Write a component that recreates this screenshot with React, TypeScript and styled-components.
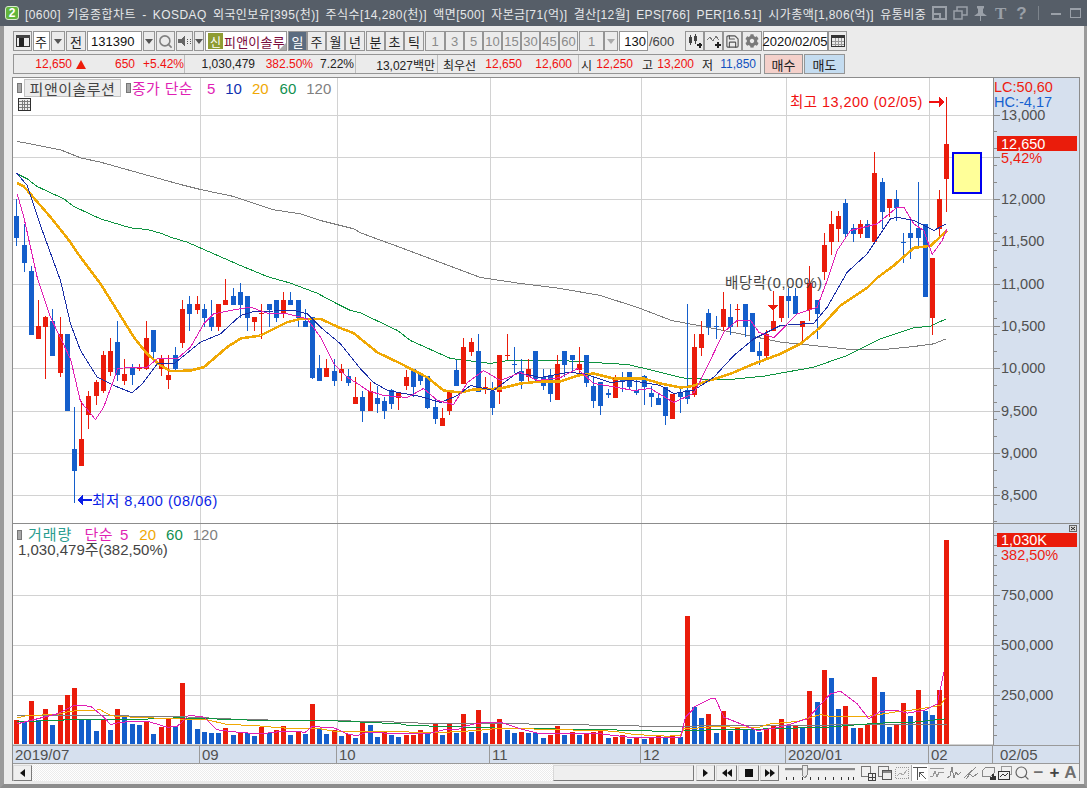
import styled, { createGlobalStyle } from 'styled-components'
import { Search, Save } from 'lucide-react'
import { FaCog } from 'react-icons/fa'

// ─── Data ─────────────────────────────────────────────────────────────────────

type Candle = [string, number, number, number, number]

// colour, high, body top, body bottom, low (pixels on the page)
const candles: Candle[] = [
  ['b',199,216,238,246],['b',224,245,263,272],['b',266,271,335,335],['r',300,326,339,339],['r',316,317,327,379],
  ['b',309,321,356,356],['r',317,334,373,377],['b',334,334,411,411],['b',407,449,471,503],['r',401,439,466,466],
  ['r',391,396,415,429],['r',380,382,396,405],['r',351,355,391,393],['r',338,351,372,376],['b',321,342,375,381],
  ['r',359,374,381,385],['b',364,368,375,385],['r',364,368,369,371],['r',321,338,369,370],['b',330,330,352,360],
  ['r',355,359,369,376],['r',355,375,380,389],['b',347,355,369,370],['r',300,309,343,348],['b',296,304,314,331],
  ['r',296,304,310,314],['b',304,309,318,327],['b',300,317,327,331],['r',304,304,327,331],['r',279,300,305,305],
  ['b',288,296,305,305],['b',283,292,305,318],['b',296,296,318,331],['r',317,317,322,331],['r',304,313,314,339],
  ['b',304,304,310,327],['b',300,300,318,322],['r',292,300,314,318],['b',292,300,305,305],['b',300,300,318,327],
  ['b',309,321,327,327],['b',317,317,378,379],['b',355,368,381,381],['r',359,368,377,377],['b',359,371,381,386],
  ['r',364,369,373,381],['b',369,376,383,386],['r',377,397,404,404],['b',391,397,411,422],['r',382,391,411,411],
  ['b',386,398,404,413],['b',397,401,411,419],['b',389,390,404,409],['r',392,392,398,410],['r',370,377,386,390],
  ['b',369,369,387,397],['b',372,374,381,385],['b',376,376,408,409],['b',398,407,419,424],['r',408,418,426,426],
  ['r',390,391,411,415],['b',360,370,386,386],['r',338,347,384,384],['r',338,342,352,356],['b',334,351,392,392],
  ['r',377,387,388,394],['b',382,391,408,415],['r',355,355,392,404],['r',334,355,356,360],['b',347,364,365,373],
  ['b',359,371,381,389],['r',359,369,377,381],['b',351,351,379,383],['b',369,377,386,390],['b',369,375,394,402],
  ['r',355,364,400,400],['b',351,351,365,377],['b',355,355,360,371],['r',347,364,370,373],['b',355,355,383,387],
  ['b',376,386,401,408],['b',382,382,406,415],['b',389,393,395,398],['r',375,377,398,398],['b',372,377,381,392],
  ['b',372,372,387,390],['b',380,390,393,395],['b',375,376,387,405],['b',386,393,397,407],['b',394,398,405,405],
  ['b',387,387,416,425],['r',394,394,419,419],['b',389,393,397,413],['b',304,390,399,404],['r',334,347,395,397],
  ['r',321,334,348,356],['b',309,313,327,335],['b',316,326,327,339],['r',292,309,327,331],['b',304,317,327,335],
  ['r',304,309,310,327],['b',304,304,327,337],['b',313,313,352,352],['b',342,351,356,365],['r',330,334,356,360],
  ['r',291,321,331,331],['r',296,296,318,322],['b',288,296,301,318],['b',288,296,314,314],['r',321,321,327,342],
  ['r',266,283,310,321],['b',300,300,314,339],['r',233,245,272,280],['r',211,224,242,255],['r',211,216,229,242],
  ['b',199,203,234,238],['b',224,228,234,242],['r',220,224,234,238],['b',220,224,238,238],['r',152,173,242,242],
  ['b',178,182,212,229],['r',199,199,208,217],['b',190,199,208,221],['b',233,242,243,263],['b',220,233,238,259],
  ['b',182,228,238,246],['b',224,224,297,297],['r',258,258,318,335],['r',190,199,229,239],['r',97,144,179,212],
]

// volume bars: top edge, in 3x pixels from y=640
const volTops = [
  240,243,183,240,207,255,195,165,144,238,238,272,238,270,207,225,252,255,246,282,260,238,258,129,235,267,276,279,279,264,285,279,279,288,260,279,270,258,285,276,282,192,267,282,270,288,282,294,246,255,291,273,285,291,
  285,285,270,276,252,285,252,278,222,276,210,279,246,237,270,279,276,279,279,294,285,258,285,276,285,282,276,270,294,291,285,297,294,297,291,285,294,288,291,-72,
  201,234,222,279,213,273,261,267,267,276,267,255,237,258,258,264,153,186,90,114,207,198,264,264,255,111,156,261,255,189,228,150,213,225,150,-300,
]
const volBlue = new Set([
  1,3,5,9,10,11,13,15,16,17,19,22,24,25,26,27,28,30,32,33,35,38,40,42,43,45,47,49,50,52,53,
  57,59,61,63,65,68,69,71,72,73,76,78,82,85,87,90,92,94,95,97,99,101,102,103,107,109,111,113,114,116,120,121,124,126,127,
])

const z = (ox: number, oy: number, flat: number[]) => {
  const out: number[] = []
  for (let i = 0; i < flat.length; i += 2) out.push(ox + flat[i] / 3, oy + flat[i + 1] / 3)
  return out
}

const ma120 = [
  ...z(0,110,[50,93,75,97,180,118,240,142,300,155,400,183,540,222,600,237,700,258,780,285,820,298,900,310,960,330,1060,355,1080,367]),
  400,247,440,262,480,277,520,283,560,288,600,295,640,308,671,320,
  ...z(680,90,[70,708,180,730,300,755,400,765,500,776,600,778,700,768,760,760,797,745]),
]
const ma60 = [
  ...z(0,110,[50,190,80,205,110,228,190,265,220,288,300,325,350,340,390,352,440,357,480,368,510,380,560,395,640,430,720,465,800,498,870,518,950,548,1010,580,1050,600,1080,607]),
  376,320,397,330,410,340,450,358,490,363,507,360,560,360,593,362,627,364,653,370,680,377,
  ...z(680,90,[30,865,150,867,250,857,400,830,500,795,600,745,700,712,750,707,797,685]),
]
const ma20 = [
  ...z(0,110,[50,218,70,228,100,262,150,320,200,382,240,440,300,520,350,600,400,680,440,730,480,765,510,782,570,780,610,770,680,710,720,684,780,675,830,650,860,635,900,625,960,625,1020,653,1060,668,1080,685]),
  377,352,400,363,427,377,443,390,460,392,473,389,500,388,520,383,540,381,560,381,577,375,593,373,613,378,643,378,660,383,680,387,
  ...z(680,90,[30,888,150,850,220,820,300,790,360,760,420,710,480,645,560,592,590,562,640,525,700,472,750,466,800,420]),
]
const ma10 = [
  ...z(0,110,[48,187,80,225,120,345,180,510,210,640,240,720,290,800,340,825,395,847,425,820,470,760,520,760,600,695,660,670,720,615,760,603,880,600,920,610,960,650,1020,700,1080,775]),
  373,382,387,390,420,396,440,402,457,395,470,385,493,390,517,372,540,377,567,372,583,373,610,382,630,380,660,385,673,393,693,390,
  ...z(680,90,[100,860,160,795,220,745,300,705,400,698,440,650,500,545,560,490,600,430,630,385,650,380,700,390,760,420,797,400]),
]
const ma5 = [
  ...z(0,110,[50,250,70,320,110,500,150,620,210,745]),
  80,401,90,413,95,419,103,407,113,380,117,368,
  ...z(0,110,[400,770,440,770,470,745,530,745,570,710,610,640,640,610,700,598,750,590,800,608,860,610,920,625,960,680,1000,760,1040,800,1080,825]),
  367,390,383,395,407,397,423,388,437,400,453,404,467,382,483,370,500,380,520,372,537,380,560,377,577,368,593,383,617,387,633,390,650,388,673,402,693,393,700,380,
  ...z(680,90,[130,725,170,690,210,690,235,725,280,742,350,670,410,650,440,570,470,480,510,420,590,400,650,350,670,350,700,400,730,420,755,492,785,450,800,415]),
]

const vol120 = [
  ...z(0,640,[50,226,384,226,386,228,530,228,700,236,860,240,1030,241,1200,245]),
  ...z(400,640,[50,247,70,250,380,250,415,253,700,254,720,257,840,258]),
  ...z(680,640,[100,255,800,252]),
]
const vol60 = [
  ...z(0,640,[50,242,188,241,190,238,430,236,530,232,620,234,700,238,860,240,1000,241]),
  ...z(400,640,[0,250,20,254,70,256,200,260,300,263,630,268,840,274,850,270]),
  ...z(680,640,[100,268,230,266,440,260,590,248,700,245,795,235]),
]
const vol20 = [
  ...z(0,640,[50,232,80,225,170,222,210,212,300,208,330,225,350,228,520,235,620,238,680,252,760,255,840,262,910,265,960,265,1000,272,1100,272]),
  ...z(400,640,[50,275,140,275,230,270,300,263,500,268,640,272,700,282,800,287,840,285,850,265,900,262]),
  ...z(680,640,[100,258,230,262,270,250,350,243,420,222,450,228,560,228,640,215,700,208,780,195,795,172]),
]
const vol5 = [
  ...z(0,640,[50,250,110,235,170,220,220,195,270,197,310,230,330,252,360,245,440,242,500,260,530,258,565,224,610,230,650,268,720,276,780,280,850,272,915,275,935,258,1000,262,1040,280,1070,286,1100,275,1200,280]),
  ...z(400,640,[80,280,130,268,170,268,190,258,230,248,300,245,360,265,420,280,520,278,600,280,700,292,840,292,855,230,880,205]),
  ...z(680,640,[40,200,90,175,105,175,130,230,230,270,300,260,380,235,450,160,480,152,530,190,565,235,600,212,650,210,680,218,730,210,770,190,790,95]),
]

const candleX = (i: number) => Math.round(16.33 + 7.21 * i)
const priceY = (p: number) => Math.round(368.3 + (10000 - p) * 0.0846)
const RED = '#ea1c0b'
const BLUE = '#145ecb'
const vGrid = [200, 337, 490, 641, 786, 929]
const priceTicks = [13000, 12500, 12000, 11500, 11000, 10500, 10000, 9500, 9000, 8500]

// ─── Chart drawings ───────────────────────────────────────────────────────────

function Line({ pts, color, width = 1 }: { pts: number[]; color: string; width?: number }) {
  return <polyline points={pts.join(' ')} fill="none" stroke={color} strokeWidth={width} strokeLinejoin="round" transform="translate(0.5 0.5)" />
}

function PriceChart() {
  return (
    <PlotSvg viewBox="13 78 980 445" width={980} height={445} shapeRendering="crispEdges">
      {priceTicks.map((p) => <line key={p} x1={13} x2={993} y1={priceY(p) + 0.5} y2={priceY(p) + 0.5} stroke="#d2d2d2" />)}
      {vGrid.map((x) => <line key={x} x1={x + 0.5} x2={x + 0.5} y1={78} y2={523} stroke="#d2d2d2" />)}
      <Line pts={ma120} color="#7d7d7d" />
      <Line pts={ma60} color="#0e9340" />
      {candles.map(([c, hi, top, bot, lo], i) => {
        const x = candleX(i)
        const col = c === 'r' ? RED : BLUE
        return (
          <g key={i} fill={col}>
            <rect x={x} y={hi} width={1} height={lo - hi} />
            <rect x={x - 2} y={top} width={5} height={Math.max(bot - top, 1)} />
          </g>
        )
      })}
      <Line pts={ma20} color="#f0a804" width={2.5} />
      <Line pts={ma10} color="#1a2ea6" />
      <Line pts={ma5} color="#e01fb4" />
      <rect x={953} y={153} width={28} height={40} fill="#ffff99" stroke="#0000f0" strokeWidth={2} />
      <polygon points="768,305 778,305 773,311" fill={RED} />
      <ChartLabel x={790} y={107} fill="#f01010" $ls={0.45}>최고 13,200 (02/05)</ChartLabel>
      <rect x={929} y={101} width={11} height={2} fill="#f01010" />
      <polygon points="939,97 939,107 944,102" fill="#f01010" />
      <ChartLabel x={725} y={288} fill="#444" $ls={0.7}>배당락(0,00%)</ChartLabel>
      <polygon points="77,500 83,495 83,505" fill="#0a1ee6" />
      <rect x={82} y={499} width={10} height={2} fill="#0a1ee6" />
      <ChartLabel x={92} y={506} fill="#0a1ee6" $ls={0.55}>최저 8,400 (08/06)</ChartLabel>
    </PlotSvg>
  )
}

function PriceAxis() {
  const minor: number[] = []
  for (let p = 8200; p <= 13000; p += 200) minor.push(p)
  return (
    <PlotSvg viewBox="994 78 85 445" width={85} height={445}>
      <g shapeRendering="crispEdges">
        {minor.map((p) => <rect key={p} x={994} y={priceY(p)} width={3} height={1} fill="#8a8a8a" />)}
        {priceTicks.map((p) => <rect key={p} x={994} y={priceY(p)} width={6} height={1} fill="#8a8a8a" />)}
      </g>
      <AxisLabel x={994} y={92} fill="#ee1c10">LC:50,60</AxisLabel>
      <AxisLabel x={994} y={107} fill="#1560d0">HC:-4,17</AxisLabel>
      {priceTicks.filter((p) => p !== 12500).map((p) => <AxisLabel key={p} x={1001} y={priceY(p) + 5}>{p.toLocaleString('en-US')}</AxisLabel>)}
      <rect x={997} y={136} width={80} height={15} fill={RED} />
      <AxisLabel x={1001} y={149} fill="#fff">12,650</AxisLabel>
      <AxisLabel x={1001} y={163} fill="#ee1c10">5,42%</AxisLabel>
    </PlotSvg>
  )
}

function VolumeChart() {
  return (
    <PlotSvg viewBox="13 524 980 221" width={980} height={221} shapeRendering="crispEdges">
      {[595, 645, 695].map((y) => <line key={y} x1={13} x2={993} y1={y} y2={y} stroke="#d2d2d2" />)}
      {vGrid.map((x) => <line key={x} x1={x + 0.5} x2={x + 0.5} y1={524} y2={745} stroke="#d2d2d2" />)}
      <line x1={13} x2={993} y1={744.5} y2={744.5} stroke="#d2d2d2" />
      {volTops.map((t, i) => {
        const top = Math.round(640 + t / 3)
        return <rect key={i} x={candleX(i) - 2} y={top} width={5} height={744 - top} fill={volBlue.has(i) ? BLUE : RED} />
      })}
      <Line pts={vol120} color="#7d7d7d" />
      <Line pts={vol60} color="#0e9340" />
      <Line pts={vol20} color="#f0a804" />
      <Line pts={vol5} color="#e01fb4" />
    </PlotSvg>
  )
}

function VolumeAxis() {
  const minor: number[] = []
  for (let y = 745; y > 530; y -= 10) minor.push(y)
  return (
    <PlotSvg viewBox="994 524 85 221" width={85} height={221}>
      <g shapeRendering="crispEdges">
        {minor.map((y) => <rect key={y} x={994} y={y} width={3} height={1} fill="#8a8a8a" />)}
        {[595, 645, 695].map((y) => <rect key={y} x={994} y={y} width={6} height={1} fill="#8a8a8a" />)}
        <rect x={997} y={533} width={80} height={14} fill={RED} />
        <rect x={1069.5} y={525.5} width={7} height={6} fill="#ddd" stroke="#666" />
      </g>
      <path d="M1071 527l4 3M1075 527l-4 3" stroke="#222" />
      <AxisLabel x={1001} y={545} fill="#fff">1,030K</AxisLabel>
      <AxisLabel x={1001} y={560} fill="#ee1c10">382,50%</AxisLabel>
      <AxisLabel x={1001} y={600}>750,000</AxisLabel>
      <AxisLabel x={1001} y={650}>500,000</AxisLabel>
      <AxisLabel x={1001} y={700}>250,000</AxisLabel>
    </PlotSvg>
  )
}

// ─── Small icons ──────────────────────────────────────────────────────────────

const Ico = ({ children, size = 16 }: { children: React.ReactNode; size?: number }) => (
  <IconSvg width={size} height={size} viewBox="0 0 16 16" fill="none" stroke="#777" strokeWidth={1} shapeRendering="crispEdges">{children}</IconSvg>
)

const LayoutIcon = () => (
  <Ico><rect x="1.5" y="2.5" width="13" height="11" stroke="#333" /><rect x="1" y="2" width="14" height="3" fill="#444" stroke="none" /><rect x="4" y="5" width="5" height="9" fill="#222" stroke="none" /></Ico>
)
const SpeakerIcon = () => (
  <Ico><path d="M1 6h3l4-4v12l-4-4H1z" fill="#666" stroke="none" /><path d="M10 6h1M10 8h1M10 10h1M13 6h1M13 8h1M13 10h1" stroke="#555" /></Ico>
)
const CandleAdd = () => (
  <Ico><rect x="2" y="4" width="3" height="6" fill="#444" stroke="none" /><path d="M3.5 2v10" stroke="#444" /><rect x="7" y="3" width="3" height="5" fill="#444" stroke="none" /><path d="M8.500 1v10" stroke="#444" /><path d="M10 12h5M12.500 10v5" stroke="#222" strokeWidth={2} /></Ico>
)
const LineAdd = () => (
  <Ico><path d="M1 7l3-3 3 4 3-5 3 4" stroke="#777" /><path d="M9 12h6M12 9v6" stroke="#222" strokeWidth={2} /></Ico>
)
const CalIcon = () => (
  <Ico><rect x="1.500" y="2.500" width="13" height="11" stroke="#333" /><rect x="2" y="3" width="12" height="2" fill="#333" stroke="none" /><path d="M2 8h12M2 11h12M5.500 5v8M8.500 5v8M11.500 5v8" stroke="#999" /></Ico>
)
const TableIcon = () => (
  <Ico size={15}><rect x="1.500" y="1.500" width="13" height="13" stroke="#222" fill="#eee" /><path d="M2 5h12M2 8h12M2 11h12M5.500 3v11M8.500 3v11M11.500 3v11" stroke="#777" /></Ico>
)
const BarIcons = {
  frameGrid: <Ico><rect x="1.500" y="1.500" width="9" height="10" /><rect x="8.500" y="8.500" width="6.500" height="6.500" fill="#eee" stroke="#444" /><path d="M12 9v6M9 12h6" stroke="#444" /></Ico>,
  overlap: <Ico><rect x="1.500" y="1.500" width="10" height="10" /><rect x="5.500" y="5.500" width="9" height="9" fill="#eee" stroke="#555" /><rect x="6" y="6" width="8" height="2" fill="#888" stroke="none" /></Ico>,
  dashed: <Ico><rect x="1.500" y="2.500" width="13" height="11" strokeDasharray="1 1" stroke="#999" /><path d="M3 11l3-3 3 2 4-5" stroke="#aaa" /></Ico>,
  cursor: <Ico><path d="M1 2h14M5 2v13" stroke="#555" /><path d="M14 14L7 7M7 12V7h5" stroke="#555" /></Ico>,
  wave: <Ico><path d="M1 3h14M1 11h3l2-5 2 6 2-5h5" stroke="#999" /></Ico>,
  squiggle: <Ico><path d="M1 13l3-2 2-9 2 11 2-6 2 3 3-3" stroke="#888" /></Ico>,
  trend: <Ico><path d="M1 13L13 2M3 14l4-5 3 3 5-4" stroke="#888" /></Ico>,
  box: <Ico><path d="M2 6l4-4h8v6l-3 3H2z" stroke="#888" /><path d="M11 15v-3M13 15V9M15 15v-4" stroke="#333" strokeWidth={1.500} /></Ico>,
  boxChart: <Ico><rect x="4.500" y="1.500" width="10" height="8" stroke="#999" /><rect x="1.500" y="6.500" width="11" height="8" fill="#eee" stroke="#333" /><path d="M3 12l3-3 2 2 3-3" stroke="#333" /></Ico>,
}

// ─── App ──────────────────────────────────────────────────────────────────────

const title =
  '[0600] 키움종합차트 - KOSDAQ 외국인보유[395(천)] 주식수[14,280(천)] 액면[500] 자본금[71(억)] 결산[12월] EPS[766] PER[16.51] 시가총액[1,806(억)] 유통비중'
const dayBtns = [19, 19, 19, 20]
const nums = ['1', '3', '5', '10', '15', '30', '45', '60']
const dateCells: [string, number][] = [['2019/07', 187], ['09', 137], ['10', 153], ['11', 151], ['12', 145], ['2020/01', 143], ['02', 64]]

export default function App() {
  return (
    <Window>
      <GlobalStyle />
      <TitleBar>
        <AppBadge>2</AppBadge>
        <TitleText>{title}</TitleText>
        <TitleIcons>
          <svg width="15" height="14" viewBox="0 0 15 14" fill="none" stroke="#9aa0a8" strokeWidth="2"><rect x="1" y="1" width="13" height="12" /><path d="M1 8h7v5" /></svg>
          <svg width="15" height="14" viewBox="0 0 15 14" fill="none" stroke="#9aa0a8" strokeWidth="1.500"><rect x="4" y="1" width="10" height="8" /><rect x="1" y="5" width="8" height="8" fill="#565e68" /></svg>
          <svg width="13" height="15" viewBox="0 0 13 15" fill="#9aa0a8"><path d="M3 0h7v2L9 3v4l4 3H0l4-3V3L3 2zM6 10h1v5H6z" /></svg>
          <TitleGlyph>T</TitleGlyph>
          <TitleGlyph $sans>?</TitleGlyph>
          <TitleSep />
          <TitleMin />
          <TitleMax />
          <svg width="10" height="10" viewBox="0 0 10 10" stroke="#9aa0a8" strokeWidth="1.300"><path d="M0 0l10 10M10 0L0 10" /></svg>
        </TitleIcons>
      </TitleBar>

      <Body>
        <ToolRow>
          <ToolBtn $w={19}><LayoutIcon /></ToolBtn>
          <ComboText $w={17}>주</ComboText>
          <ToolBtn $w={14}><Caret /></ToolBtn>
          <ToolBtn $w={20}>전</ToolBtn>
          <ComboText $w={55} $left>131390</ComboText>
          <ToolBtn $w={12}><Caret /></ToolBtn>
          <ToolBtn $w={19}><Search size={15} color="#808080" strokeWidth={2.500} /></ToolBtn>
          <ToolBtn $w={17}><SpeakerIcon /></ToolBtn>
          <ToolBtn $w={10}><Caret /></ToolBtn>
          <SignalBox>
            <SignalTag>신</SignalTag>
            <SignalName>피앤이솔루</SignalName>
            <SignalCorner />
          </SignalBox>
          <BtnGroup>
            {['일', '주', '월', '년'].map((t, i) => <ToolBtn key={t} $w={dayBtns[i]} $active={i === 0}>{t}</ToolBtn>)}
          </BtnGroup>
          <BtnGroup>
            {['분', '초', '틱'].map((t, i) => <ToolBtn key={t} $w={dayBtns[i + 1]}>{t}</ToolBtn>)}
          </BtnGroup>
          <BtnGroup>
            {nums.map((n, i) => <ToolBtn key={n} $w={i === 0 ? 20 : 19} $dim>{n}</ToolBtn>)}
          </BtnGroup>
          <BtnGroup>
            <ToolBtn $w={25} $dim>1</ToolBtn>
            <ToolBtn $w={14}><Caret $dim /></ToolBtn>
          </BtnGroup>
          <ComboText $w={29} $right>130</ComboText>
          <CountText>/600</CountText>
          <BtnGroup>
            <ToolBtn $w={19}><CandleAdd /></ToolBtn>
            <ToolBtn $w={19}><LineAdd /></ToolBtn>
            <ToolBtn $w={19}><Save size={15} color="#555" strokeWidth={1.800} /></ToolBtn>
            <ToolBtn $w={20}><FaCog size={14} color="#7a7a7a" /></ToolBtn>
          </BtnGroup>
          <BtnGroup>
            <ComboText $w={65}>2020/02/05</ComboText>
            <ToolBtn $w={19}><CalIcon /></ToolBtn>
          </BtnGroup>
        </ToolRow>

        <StatusRow>
          <StatusGroup>
            <StatCell $w={171}>
              <Stat $w={58} $c="#f01010">12,650</Stat>
              <UpMark />
              <Stat $w={49} $c="#f01010">650</Stat>
              <Stat $w={49} $c="#f01010">+5.42%</Stat>
            </StatCell>
            <StatCell $w={171}>
              <Stat $w={70}>1,030,479</Stat>
              <Stat $w={58} $c="#f01010">382.50%</Stat>
              <Stat $w={41}>7.22%</Stat>
            </StatCell>
            <StatCell $w={82}>
              <Stat $w={79}>13,027백만</Stat>
            </StatCell>
            <StatCell $w={141}>
              <Stat $w={38}>최우선</Stat>
              <Stat $w={46} $c="#f01010">12,650</Stat>
              <Stat $w={50} $c="#f01010">12,600</Stat>
            </StatCell>
            <StatCell $w={183} $last>
              <Stat $w={13}>시</Stat>
              <Stat $w={41} $c="#f01010">12,250</Stat>
              <Stat $w={20}>고</Stat>
              <Stat $w={41} $c="#f01010">13,200</Stat>
              <Stat $w={19}>저</Stat>
              <Stat $w={43} $c="#1050c0">11,850</Stat>
            </StatCell>
          </StatusGroup>
          <TradeBtn $bg="#f4d0ca" $w={39}>매수</TradeBtn>
          <TradeBtn $bg="#c4dcf0" $w={41}>매도</TradeBtn>
        </StatusRow>

        <ChartFrame>
          <Pane $h={445}>
            <Plot>
              <PriceChart />
              <PriceLegend>
                <LegendHandle />
                <LegendBtn>피앤이솔루션</LegendBtn>
                <LegendHandle />
                <LegendText $c="#e01fb4" $ml={1} $ls={0.3}>종가 단순</LegendText>
                <LegendText $c="#e01fb4" $ml={14}>5</LegendText>
                <LegendText $c="#1030b0" $ml={10}>10</LegendText>
                <LegendText $c="#f0a804" $ml={10}>20</LegendText>
                <LegendText $c="#109050" $ml={11}>60</LegendText>
                <LegendText $c="#808080" $ml={10}>120</LegendText>
              </PriceLegend>
              <TableBtn><TableIcon /></TableBtn>
            </Plot>
            <AxisCol><PriceAxis /></AxisCol>
          </Pane>
          <Pane $h={222} $divider>
            <Plot>
              <VolumeChart />
              <VolumeLegend>
                <LegendRow>
                  <LegendHandle />
                  <LegendText $c="#2a9d8f" $ml={6} $ls={1}>거래량</LegendText>
                  <LegendText $c="#e01fb4" $ml={12} $ls={0.5}>단순</LegendText>
                  <LegendText $c="#e01fb4" $ml={7}>5</LegendText>
                  <LegendText $c="#f0a804" $ml={11}>20</LegendText>
                  <LegendText $c="#109050" $ml={10}>60</LegendText>
                  <LegendText $c="#808080" $ml={10}>120</LegendText>
                </LegendRow>
                <LegendText $c="#444" $ml={1}>1,030,479주(382,50%)</LegendText>
              </VolumeLegend>
            </Plot>
            <AxisCol><VolumeAxis /></AxisCol>
          </Pane>
          <DateRow>
            {dateCells.map(([t, w]) => <DateCell key={t} $w={w}>{t}</DateCell>)}
            <DateLast>02/05</DateLast>
          </DateRow>
          <ScrollRow>
            <ScrollBtn $w={19}><LeftTri /></ScrollBtn>
            <ScrollTrack />
            <ScrollThumb />
            <NavGroup>
              <ScrollBtn $w={19}><RightTri /></ScrollBtn>
              <ScrollBtn $w={21}><LeftTri /><LeftTri /></ScrollBtn>
              <ScrollBtn $w={21}><StopMark /></ScrollBtn>
              <ScrollBtn $w={19}><RightTri /><RightTri /></ScrollBtn>
            </NavGroup>
            <IconSvg width="72" height="17" viewBox="0 0 72 17" shapeRendering="crispEdges">
              <rect x="1" y="4" width="70" height="2" fill="#8a8a8a" />
              <rect x="1" y="6" width="70" height="1" fill="#ddd" />
              <path d="M18 1h5v10l-2 3-3-3z" fill="#e8e8e8" stroke="#8a8a8a" />
              {[2, 9, 18, 26, 34, 41, 49, 57, 64, 69].map((x) => <rect key={x} x={x} y={13} width={1} height={3} fill="#333" />)}
            </IconSvg>
            <BottomIcons>
              {BarIcons.frameGrid}
              {BarIcons.overlap}
              {BarIcons.dashed}
              <ActiveTool>{BarIcons.cursor}</ActiveTool>
              {BarIcons.wave}
              {BarIcons.squiggle}
              {BarIcons.trend}
              {BarIcons.box}
              {BarIcons.boxChart}
              <Search size={16} color="#666" strokeWidth={1.800} />
              <BoldGlyph>−</BoldGlyph>
              <BoldGlyph $dark>+</BoldGlyph>
              <BoldGlyph>A</BoldGlyph>
            </BottomIcons>
          </ScrollRow>
        </ChartFrame>
      </Body>
    </Window>
  )
}

// ─── Styles ───────────────────────────────────────────────────────────────────

const FONT = `"Liberation Sans", "Noto Sans CJK KR", sans-serif`

const GlobalStyle = createGlobalStyle`
  html, body { margin: 0; padding: 0; background: #ebebeb; overflow: hidden; }
  * { box-sizing: border-box; }
  body { font-family: ${FONT}; font-size: 12px; color: #222; }
`

const Window = styled.div`
  width: 1087px;
  height: 788px;
  display: flex;
  flex-direction: column;
  background: #ebebeb;
  border-left: 4px solid #9a9a9a;
  border-right: 3px solid #9a9a9a;
  border-bottom: 4px solid #8c8c8c;
`

const TitleBar = styled.div`
  height: 26px;
  margin-left: -4px;
  margin-right: -3px;
  flex: none;
  display: flex;
  align-items: center;
  background: #565e68;
  padding-left: 5px;
`

const AppBadge = styled.div`
  width: 14px;
  height: 14px;
  border-radius: 3px;
  background: #62b53c;
  border: 1px solid #d8eccd;
  color: #fff;
  font-size: 12px;
  font-weight: bold;
  display: flex;
  align-items: center;
  justify-content: center;
  flex: none;
`

const TitleText = styled.div`
  width: 902px;
  margin-left: 6px;
  flex: none;
  overflow: hidden;
  white-space: nowrap;
  color: #e6e8ea;
  font-size: 12px;
  letter-spacing: 0.42px;
  word-spacing: 2.5px;
`

const TitleIcons = styled.div`
  display: flex;
  align-items: center;
  gap: 6px;
  margin-left: 5px;
`

const TitleGlyph = styled.span<{ $sans?: boolean }>`
  color: #9aa0a8;
  font-family: ${({ $sans }) => ($sans ? '"Liberation Sans"' : '"Liberation Serif"')}, sans-serif;
  font-weight: bold;
  font-size: 17px;
  line-height: 1;
  margin: 0 2px;
`

const TitleSep = styled.div`
  width: 1px;
  height: 14px;
  background: #7d848c;
  margin: 0 3px;
`

const TitleMin = styled.div`
  width: 10px;
  height: 2px;
  background: #9aa0a8;
  align-self: flex-end;
  margin: 0 3px 7px;
`

const TitleMax = styled.div`
  width: 11px;
  height: 10px;
  border: 1px solid #9aa0a8;
  border-top-width: 2px;
  margin-right: 3px;
`

const Body = styled.div`
  flex: 1;
  display: flex;
  flex-direction: column;
  padding: 5px 4px 3px 8px;
  min-height: 0;
`

const ToolRow = styled.div`
  display: flex;
  height: 20px;
  gap: 1px;
  padding-left: 1px;
  flex: none;
`

const BtnGroup = styled.div`
  display: flex;
`

const ToolBtn = styled.div<{ $w: number; $active?: boolean; $dim?: boolean }>`
  width: ${({ $w }) => $w}px;
  height: 20px;
  flex: none;
  display: flex;
  align-items: center;
  justify-content: center;
  border: 1px solid #959595;
  background: ${({ $active }) => ($active ? '#5b6c80' : '#ebebeb')};
  color: ${({ $active, $dim }) => ($active ? '#fff' : $dim ? '#8a8a8a' : '#222')};
  font-size: 13px;
  overflow: hidden;
`

const ComboText = styled.div<{ $w: number; $left?: boolean; $right?: boolean }>`
  width: ${({ $w }) => $w}px;
  height: 20px;
  flex: none;
  display: flex;
  align-items: center;
  justify-content: ${({ $left, $right }) => ($left ? 'flex-start' : $right ? 'flex-end' : 'center')};
  padding: 0 1px 0 ${({ $left }) => ($left ? 3 : 0)}px;
  border: 1px solid #959595;
  background: #fff;
  color: #111;
  font-size: 13px;
  white-space: nowrap;
`

const Caret = styled.span<{ $dim?: boolean }>`
  width: 0;
  height: 0;
  border-left: 4px solid transparent;
  border-right: 4px solid transparent;
  border-top: 5px solid ${({ $dim }) => ($dim ? '#aaa' : '#555')};
`

const SignalBox = styled.div`
  position: relative;
  width: 82px;
  height: 20px;
  flex: none;
  display: flex;
  align-items: center;
  gap: 1px;
  padding-left: 2px;
  border: 1px solid #959595;
  background: #fff;
`

const SignalTag = styled.span`
  width: 15px;
  height: 16px;
  flex: none;
  display: flex;
  align-items: center;
  justify-content: center;
  background: #8f9c33;
  color: #fff;
  font-size: 12px;
`

const SignalName = styled.span`
  color: #7a0c3c;
  font-size: 13px;
  white-space: nowrap;
  letter-spacing: 0.2px;
`

const SignalCorner = styled.span`
  position: absolute;
  right: 0;
  bottom: 0;
  border-left: 7px solid transparent;
  border-bottom: 7px solid #a8a8a8;
`

const CountText = styled.div`
  width: 35px;
  flex: none;
  display: flex;
  align-items: center;
  font-size: 13px;
  color: #444;
`

const StatusRow = styled.div`
  display: flex;
  height: 20px;
  margin-top: 3px;
  padding-left: 1px;
  flex: none;
`

const StatusGroup = styled.div`
  display: flex;
  width: 748px;
  border: 1px solid #959595;
  margin-right: 3px;
`

const StatCell = styled.div<{ $w: number; $last?: boolean }>`
  width: ${({ $w }) => $w}px;
  flex: none;
  display: flex;
  align-items: center;
  border-right: ${({ $last }) => ($last ? 'none' : '1px solid #bdbdbd')};
`

const Stat = styled.span<{ $w: number; $c?: string }>`
  width: ${({ $w }) => $w}px;
  flex: none;
  text-align: right;
  color: ${({ $c }) => $c ?? '#222'};
  white-space: nowrap;
`

const UpMark = styled.span`
  width: 0;
  height: 0;
  margin-left: 4px;
  flex: none;
  border-left: 5px solid transparent;
  border-right: 5px solid transparent;
  border-bottom: 9px solid #ee1c0a;
`

const TradeBtn = styled.div<{ $bg: string; $w: number }>`
  width: ${({ $w }) => $w}px;
  flex: none;
  margin-right: 1px;
  display: flex;
  align-items: center;
  justify-content: center;
  background: ${({ $bg }) => $bg};
  border: 1px solid #959595;
  font-size: 13px;
  color: #222;
`

const ChartFrame = styled.div`
  flex: 1;
  margin-top: 3px;
  display: flex;
  flex-direction: column;
  border-top: 1px solid #8c8c8c;
  border-left: 1px solid #8c8c8c;
  border-right: 1px solid #8c8c8c;
  min-height: 0;
`

const Pane = styled.div<{ $h: number; $divider?: boolean }>`
  height: ${({ $h }) => $h}px;
  flex: none;
  display: flex;
  border-top: ${({ $divider }) => ($divider ? '1px solid #8c8c8c' : 'none')};
`

const Plot = styled.div`
  position: relative;
  width: 980px;
  flex: none;
  background: #fff;
  overflow: hidden;
`

const AxisCol = styled.div`
  flex: 1;
  background: #d6e0ee;
  border-left: 1px solid #8c8c8c;
  overflow: hidden;
`

const PlotSvg = styled.svg`
  display: block;
`

const IconSvg = styled.svg`
  display: block;
  flex: none;
`

const ChartLabel = styled.text<{ $ls: number }>`
  font-family: ${FONT};
  font-size: 14.5px;
  letter-spacing: ${({ $ls }) => $ls}px;
`

const AxisLabel = styled.text`
  font-family: ${FONT};
  font-size: 14.5px;
  fill: ${({ fill }) => fill ?? '#505050'};
`

const PriceLegend = styled.div`
  position: absolute;
  top: 1px;
  left: 4px;
  display: flex;
  align-items: center;
`

const LegendHandle = styled.span`
  width: 5px;
  height: 10px;
  flex: none;
  background: #a8a8a8;
  border: 1px solid #777;
`

const LegendBtn = styled.span`
  width: 97px;
  height: 18px;
  margin: 0 5px 0 2px;
  display: flex;
  align-items: center;
  justify-content: center;
  background: #ececec;
  border: 1px solid #c4c4c4;
  font-size: 15px;
  color: #444;
  letter-spacing: 0.5px;
  white-space: nowrap;
`

const LegendText = styled.span<{ $c: string; $ml: number; $ls?: number }>`
  margin-left: ${({ $ml }) => $ml}px;
  color: ${({ $c }) => $c};
  font-size: 15px;
  line-height: 15px;
  letter-spacing: ${({ $ls }) => $ls ?? 0}px;
  white-space: nowrap;
`

const TableBtn = styled.div`
  position: absolute;
  top: 19px;
  left: 4px;
  line-height: 0;
`

const VolumeLegend = styled.div`
  position: absolute;
  top: 3px;
  left: 4px;
  display: flex;
  flex-direction: column;
  gap: 0;
`

const LegendRow = styled.div`
  display: flex;
  align-items: center;
`

const DateRow = styled.div`
  height: 19px;
  flex: none;
  display: flex;
  background: #d6e0ee;
  border-top: 1px solid #9a9a9a;
  border-bottom: 1px solid #9a9a9a;
`

const DateCell = styled.div<{ $w: number }>`
  width: ${({ $w }) => $w}px;
  flex: none;
  padding-left: 2px;
  border-right: 1px solid #9a9a9a;
  font-size: 15px;
  line-height: 17px;
  color: #505050;
`

const DateLast = styled.div`
  flex: 1;
  padding-left: 7px;
  font-size: 15px;
  line-height: 17px;
  color: #505050;
`

const ScrollRow = styled.div`
  height: 17px;
  flex: none;
  display: flex;
  align-items: center;
  background: #f0f0f0;
`

const ScrollBtn = styled.div<{ $w: number }>`
  width: ${({ $w }) => $w}px;
  height: 16px;
  flex: none;
  display: flex;
  align-items: center;
  justify-content: center;
  background: #efefef;
  border: 1px solid #d8d8d8;
  border-right-color: #7a7a7a;
  border-bottom-color: #7a7a7a;
`

const ScrollTrack = styled.div`
  width: 521px;
  height: 17px;
  flex: none;
  background: repeating-conic-gradient(#fff 0 25%, #ececec 0 50%) 0 0 / 2px 2px;
`

const ScrollThumb = styled.div`
  width: 141px;
  height: 16px;
  flex: none;
  background: #efefef;
  border: 1px solid #d8d8d8;
  border-right-color: #7a7a7a;
  border-bottom-color: #7a7a7a;
`

const NavGroup = styled.div`
  display: flex;
  flex: none;
  margin: 0 5px 0 2px;
  gap: 1px;
`

const LeftTri = styled.span`
  border-top: 4px solid transparent;
  border-bottom: 4px solid transparent;
  border-right: 5px solid #111;
`

const RightTri = styled.span`
  border-top: 4px solid transparent;
  border-bottom: 4px solid transparent;
  border-left: 5px solid #111;
`

const StopMark = styled.span`
  width: 8px;
  height: 8px;
  background: #111;
`

const BottomIcons = styled.div`
  display: flex;
  align-items: center;
  flex: none;
  margin-left: 4px;
  gap: 1px;
`

const ActiveTool = styled.span`
  display: flex;
  background: #fff;
  border-left: 1px solid #aaa;
`

const BoldGlyph = styled.span<{ $dark?: boolean }>`
  width: 15px;
  text-align: center;
  font-family: "Liberation Sans", sans-serif;
  font-size: 17px;
  font-weight: bold;
  line-height: 16px;
  color: ${({ $dark }) => ($dark ? '#444' : '#707070')};
`
